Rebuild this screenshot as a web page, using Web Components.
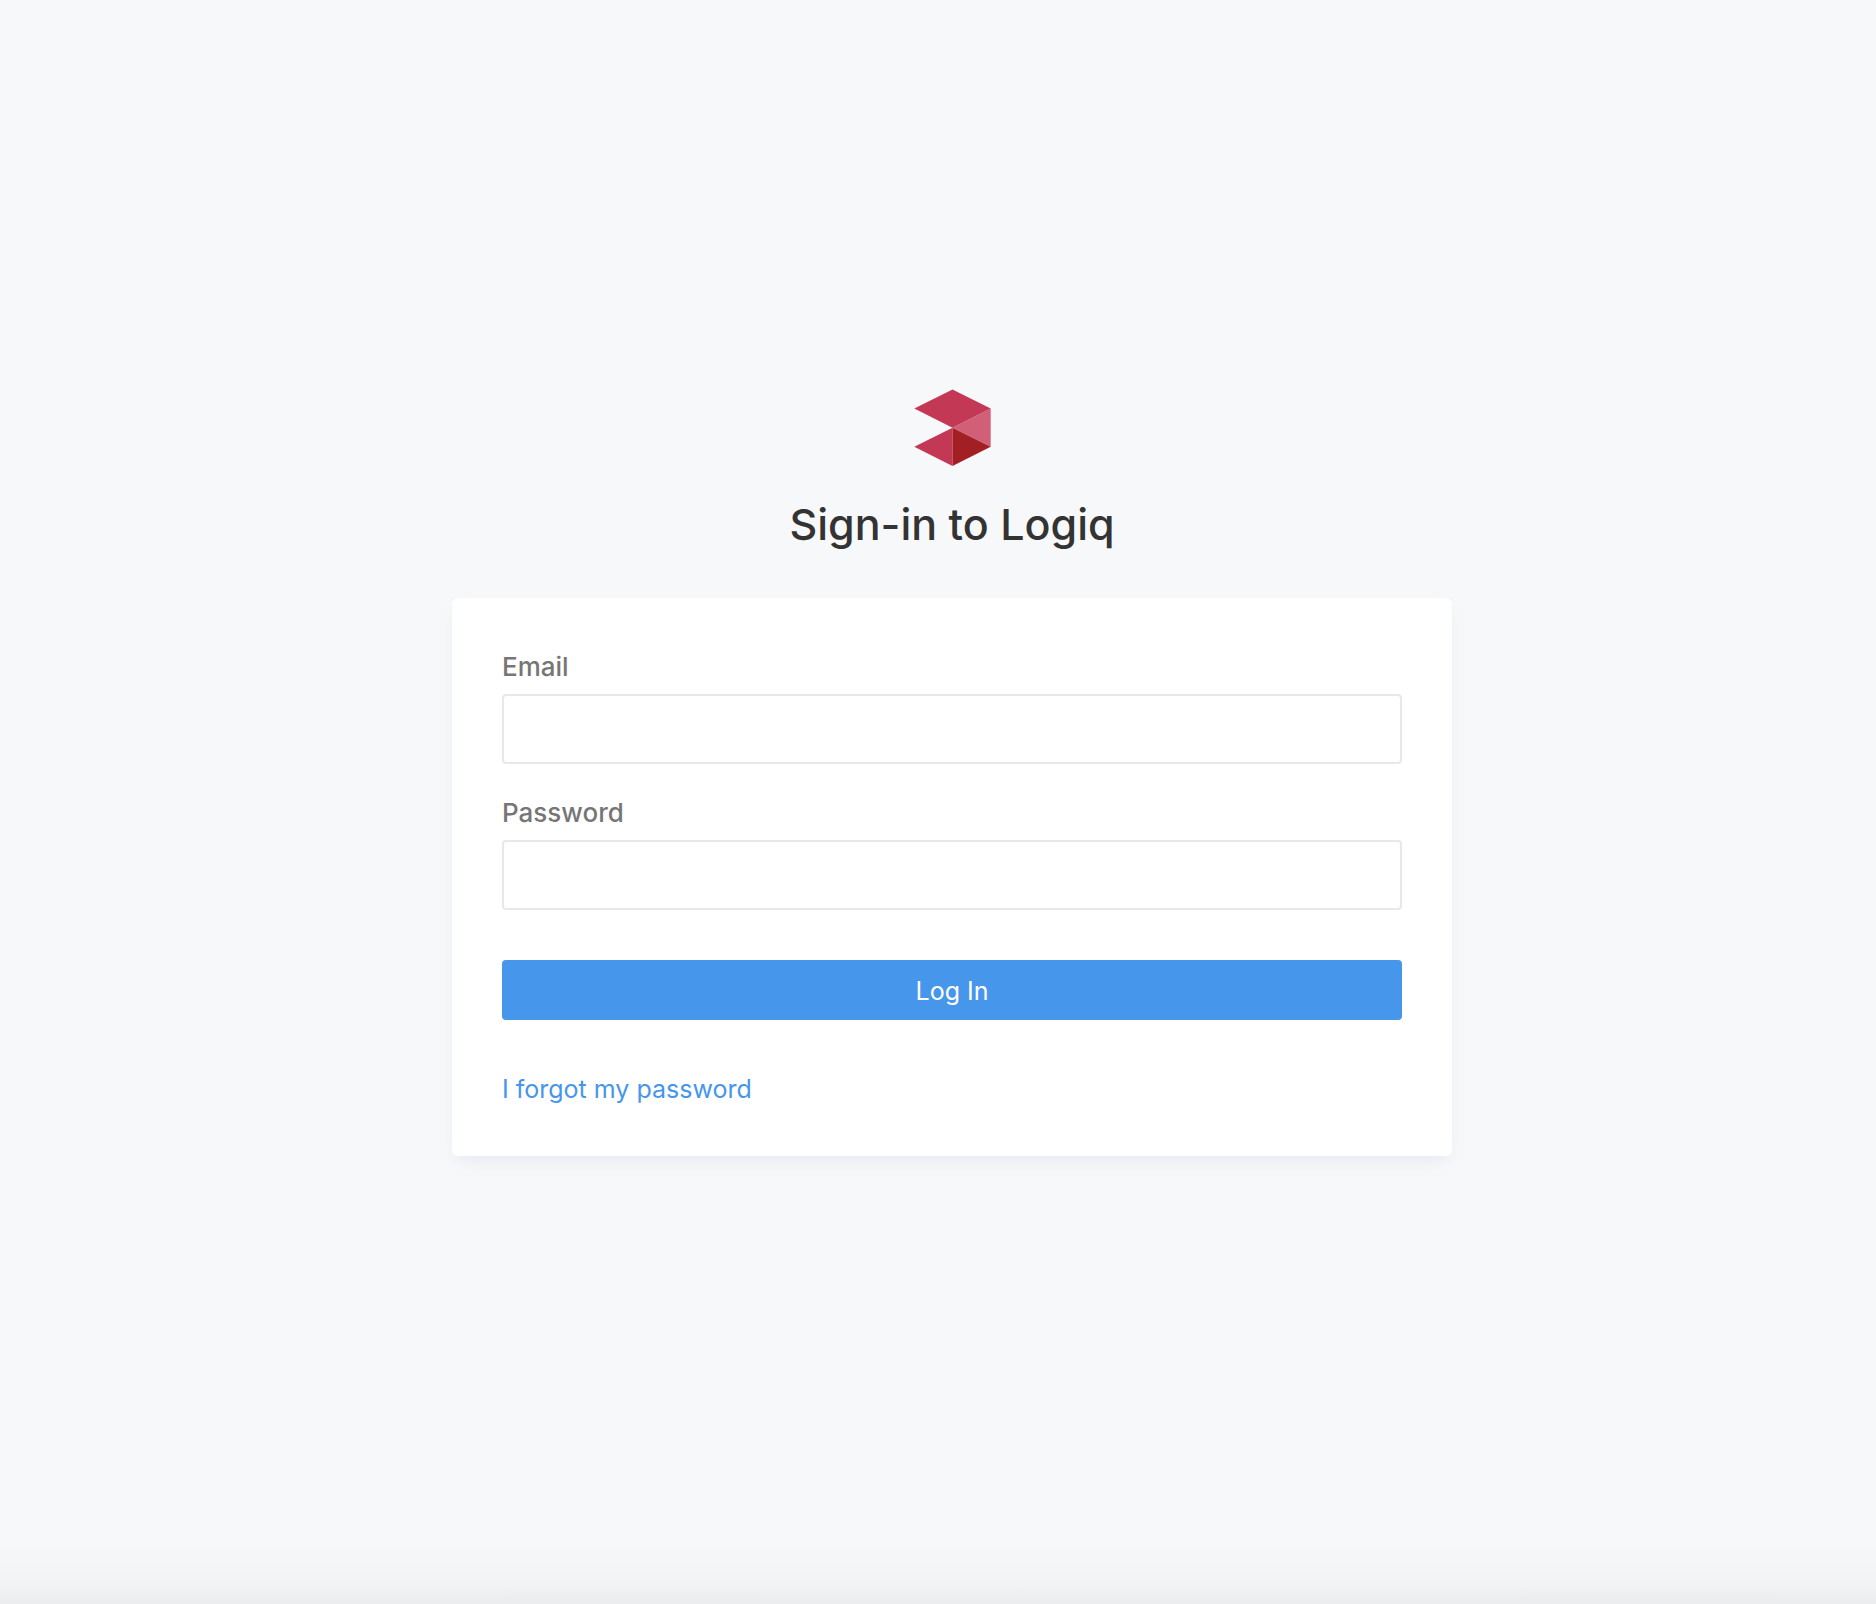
<!DOCTYPE html>
<html lang="en">
<head>
<meta charset="utf-8">
<meta name="viewport" content="width=device-width, initial-scale=1">
<title>Sign-in to Logiq</title>
<style>
  body { margin: 0; background: #f6f8f9; font-family: Inter, "Liberation Sans", sans-serif; font-size: 25px; line-height: 38px; color: #333; }
</style>
</head>
<body>
<login-page>
  <brand-logo slot="logo"></brand-logo>
  <span slot="title">Sign-in to Logiq</span>
  <login-card></login-card>
</login-page>
<script>
class ShadowElement extends HTMLElement {
  constructor() {
    super();
    this.attachShadow({ mode: "open" }).innerHTML = this.constructor.markup;
  }
}

customElements.define("brand-logo", class extends ShadowElement {
  static markup = `
    <style>
      :host { display: block; width: 77px; height: 77px; }
      svg { display: block; width: 100%; height: 100%; }
    </style>
    <svg viewBox="0 0 77 77" role="img" aria-label="Logiq">
      <path d="M38.5 38.7 76.7 19.6V57.8Z" fill="#d05f77"/>
      <path d="M.3 19.6 38.5.5 76.7 19.6 38.5 38.7Z" fill="#c33855"/>
      <path d="M38.5 38.7V76.9L.3 57.8Z" fill="#c33855"/>
      <path d="M38.5 38.7 76.7 57.8 38.5 76.9Z" fill="#a22024"/>
    </svg>`;
});

customElements.define("login-page", class extends ShadowElement {
  static markup = `
    <style>
      :host { display: flex; box-sizing: border-box; min-height: 100vh; padding: 28px 0 88px 28px;
        background: linear-gradient(to top, #ebeced, #f2f3f4 20px, #f7f8fa 64px, #f7f8fa); }
      main { display: flex; flex-direction: column; align-items: center; justify-content: center; flex: 1; }
      h1 { margin: 32px 0 48px; font-size: 43px; line-height: 52px; font-weight: 500; color: #333; }
      .content { width: 100%; max-width: 1000px; }
    </style>
    <main>
      <slot name="logo"></slot>
      <h1><slot name="title"></slot></h1>
      <div class="content"><slot></slot></div>
    </main>`;
});

customElements.define("text-field", class extends ShadowElement {
  static markup = `
    <style>
      :host { display: flex; flex-direction: column; gap: 8px; }
      label { align-self: flex-start; font-size: 26px; font-weight: 500; color: #767676; }
      input { box-sizing: border-box; width: 100%; height: 70px; padding: 0 24px; border: 2px solid #e8e8e8;
        border-radius: 4px; background: #fff; font: inherit; color: #595959; outline: none; }
      input:focus { border-color: #4696ec; }
    </style>
    <label for="control"></label>
    <input id="control">`;
  connectedCallback() {
    this.shadowRoot.querySelector("label").textContent = this.getAttribute("label");
    const input = this.shadowRoot.querySelector("input");
    input.type = this.getAttribute("type");
    input.name = this.getAttribute("type");
  }
});

customElements.define("login-card", class extends ShadowElement {
  static markup = `
    <style>
      :host { display: block; padding: 50px 50px 48px; border-radius: 6px; background: #fff;
        box-shadow: 0 8px 18px -6px rgba(102, 136, 153, .15); }
      form { display: flex; flex-direction: column; gap: 50px; }
      .fields { display: flex; flex-direction: column; gap: 30px; }
      button { height: 60px; padding: 2px 0 0; border: 0; border-radius: 4px; background: #4696ec; color: #fff;
        font: inherit; cursor: pointer; }
      a { align-self: flex-start; color: #4696ec; text-decoration: none; }
    </style>
    <form>
      <div class="fields">
        <text-field label="Email" type="email"></text-field>
        <text-field label="Password" type="password"></text-field>
      </div>
      <button type="submit">Log In</button>
      <a href="#forgot">I forgot my password</a>
    </form>`;
});
</script>
</body>
</html>
